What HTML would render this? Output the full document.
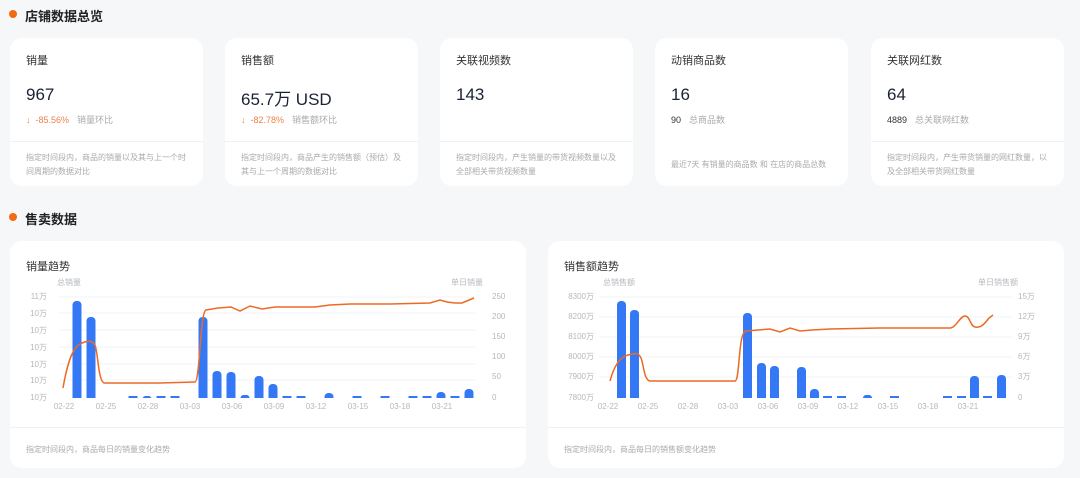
<!DOCTYPE html>
<html><head><meta charset="utf-8"><style>
*{margin:0;padding:0;box-sizing:border-box}
body{width:1080px;height:478px;background:#f5f7f9;font-family:"Liberation Sans","Noto Sans CJK SC",sans-serif;position:relative;overflow:hidden;color:#1f2533}
.h{position:absolute;left:25px;font-size:13px;font-weight:bold;color:#222}
.h:before{content:"";position:absolute;left:-16px;top:4px;width:8px;height:8px;border-radius:50%;background:#f26b10}
.card{position:absolute;top:38px;width:193px;height:148px;background:#fff;border-radius:12px}
.t{position:absolute;left:16px;top:14px;font-size:11px;color:#333}
.v{position:absolute;left:16px;top:47px;font-size:17px;color:#1a2233}
.s{position:absolute;left:16px;top:75px;font-size:9px;color:#aaa}
.s b{font-weight:normal;color:#f0804a;margin-right:8px}
.s i{font-style:normal;color:#333;margin-right:8px}
.line{position:absolute;left:0;right:0;top:103px;border-top:1px solid #f0f1f3}
.d{position:absolute;left:16px;top:113px;width:162px;font-size:8px;line-height:14px;color:#aaa}
.cc{position:absolute;top:241px;width:516px;height:227px;background:#fff;border-radius:12px}
.cc .t{top:17px;font-size:11px}
.cc .line{top:186px}
.cc .d{top:202px;width:400px}
svg{position:absolute;left:0;top:0}
svg text{font-family:"Liberation Sans","Noto Sans CJK SC",sans-serif;font-size:8px;fill:#b5b8bd}
</style></head><body>
<div class="h" style="top:6px">店铺数据总览</div>
<div class="card" style="left:10px"><div class="t">销量</div><div class="v">967</div><div class="s"><b>↓ &nbsp;-85.56%</b>销量环比</div><div class="line"></div><div class="d">指定时间段内，商品的销量以及其与上一个时间周期的数据对比</div></div>
<div class="card" style="left:225px"><div class="t">销售额</div><div class="v">65.7万 USD</div><div class="s"><b>↓ &nbsp;-82.78%</b>销售额环比</div><div class="line"></div><div class="d">指定时间段内，商品产生的销售额（预估）及其与上一个周期的数据对比</div></div>
<div class="card" style="left:440px"><div class="t">关联视频数</div><div class="v">143</div><div class="line"></div><div class="d">指定时间段内，产生销量的带货视频数量以及全部相关带货视频数量</div></div>
<div class="card" style="left:655px"><div class="t">动销商品数</div><div class="v">16</div><div class="s"><i>90</i>总商品数</div><div class="d" style="top:120px;width:175px">最近7天 有销量的商品数 和 在店的商品总数</div></div>
<div class="card" style="left:871px"><div class="t">关联网红数</div><div class="v">64</div><div class="s"><i>4889</i>总关联网红数</div><div class="line"></div><div class="d">指定时间段内，产生带货销量的网红数量，以及全部相关带货网红数量</div></div>
<div class="h" style="top:209px">售卖数据</div>
<div class="cc" style="left:10px"><div class="t">销量趋势</div><div class="line"></div><div class="d">指定时间段内，商品每日的销量变化趋势</div></div>
<div class="cc" style="left:548px"><div class="t">销售额趋势</div><div class="line"></div><div class="d">指定时间段内，商品每日的销售额变化趋势</div></div>
<svg width="1080" height="478">
<g stroke="#f2f3f5" stroke-width="1">
<path d="M59 313H475M59 330H475M59 347H475M59 364H475M59 380H475M59 297H475"/>
<path d="M599 317H1012M599 337H1012M599 357H1012M599 377H1012M599 297H1012"/>
</g>
<g fill="#3478f6">
<rect x="72.5" y="301" width="9" height="101" rx="4"/><rect x="86.5" y="317" width="9" height="85" rx="4"/>
<rect x="142.5" y="396" width="9" height="6" rx="3"/><rect x="198.5" y="317" width="9" height="85" rx="4"/>
<rect x="212.5" y="371" width="9" height="31" rx="4"/><rect x="226.5" y="372" width="9" height="30" rx="4"/>
<rect x="240.5" y="395" width="9" height="7" rx="3"/><rect x="254.5" y="376" width="9" height="26" rx="4"/>
<rect x="268.5" y="384" width="9" height="18" rx="4"/><rect x="324.5" y="393" width="9" height="9" rx="4"/>
<rect x="436.5" y="392" width="9" height="10" rx="4"/><rect x="464.5" y="389" width="9" height="13" rx="4"/>
<rect x="128.5" y="396" width="9" height="6"/><rect x="156.5" y="396" width="9" height="6"/><rect x="170.5" y="396" width="9" height="6"/><rect x="282.5" y="396" width="9" height="6"/><rect x="296.5" y="396" width="9" height="6"/><rect x="352.5" y="396" width="9" height="6"/><rect x="380.5" y="396" width="9" height="6"/><rect x="408.5" y="396" width="9" height="6"/><rect x="422.5" y="396" width="9" height="6"/><rect x="450.5" y="396" width="9" height="6"/>
<rect x="617" y="301" width="9" height="101" rx="4"/><rect x="630" y="310" width="9" height="92" rx="4"/>
<rect x="743" y="313" width="9" height="89" rx="4"/><rect x="757" y="363" width="9" height="39" rx="4"/>
<rect x="770" y="366" width="9" height="36" rx="4"/><rect x="797" y="367" width="9" height="35" rx="4"/>
<rect x="810" y="389" width="9" height="13" rx="4"/><rect x="823" y="396" width="9" height="6"/><rect x="837" y="396" width="9" height="6"/>
<rect x="863" y="395" width="9" height="7" rx="3"/><rect x="890" y="396" width="9" height="6"/><rect x="943" y="396" width="9" height="6"/><rect x="957" y="396" width="9" height="6"/>
<rect x="970" y="376" width="9" height="26" rx="4"/><rect x="983" y="396" width="9" height="6"/><rect x="997" y="375" width="9" height="27" rx="4"/>
</g>
<rect x="55" y="398" width="425" height="5" fill="#fff"/>
<rect x="600" y="398" width="412" height="5" fill="#fff"/>
<g text-anchor="end"><text x="47" y="299">11万</text><text x="47" y="316">10万</text><text x="47" y="333">10万</text><text x="47" y="350">10万</text><text x="47" y="367">10万</text><text x="47" y="383">10万</text><text x="47" y="400">10万</text>
<text x="594" y="299">8300万</text><text x="594" y="319">8200万</text><text x="594" y="339">8100万</text><text x="594" y="359">8000万</text><text x="594" y="379">7900万</text><text x="594" y="400">7800万</text></g>
<text x="57" y="285">总销量</text><text x="451" y="285">单日销量</text><text x="603" y="285">总销售额</text><text x="978" y="285">单日销售额</text>
<text x="492" y="299">250</text><text x="492" y="319">200</text><text x="492" y="339">150</text><text x="492" y="359">100</text><text x="492" y="379">50</text><text x="492" y="400">0</text>
<text x="1018" y="299">15万</text><text x="1018" y="319">12万</text><text x="1018" y="339">9万</text><text x="1018" y="359">6万</text><text x="1018" y="379">3万</text><text x="1018" y="400">0</text>
<g text-anchor="middle"><text x="64" y="409">02-22</text><text x="106" y="409">02-25</text><text x="148" y="409">02-28</text><text x="190" y="409">03-03</text><text x="232" y="409">03-06</text><text x="274" y="409">03-09</text><text x="316" y="409">03-12</text><text x="358" y="409">03-15</text><text x="400" y="409">03-18</text><text x="442" y="409">03-21</text>
<text x="608" y="409">02-22</text><text x="648" y="409">02-25</text><text x="688" y="409">02-28</text><text x="728" y="409">03-03</text><text x="768" y="409">03-06</text><text x="808" y="409">03-09</text><text x="848" y="409">03-12</text><text x="888" y="409">03-15</text><text x="928" y="409">03-18</text><text x="968" y="409">03-21</text></g>
<path fill="none" stroke="#ec6a23" stroke-width="1.5" d="M63 388C67 365 72 348 80 344S92 340 95 345C98 352 98 380 104 383L160 383L195 382C200 382 200 312 206 310L218 308L231 307L240 311L250 306L262 309L275 307L290 307L315 307L330 305L350 304L390 304L430 303L440 300L447 302L455 303L462 303L474 298"/>
<path fill="none" stroke="#ec6a23" stroke-width="1.5" d="M610 381C614 366 620 357 628 355S638 352 641 358C644 366 644 380 650 381L735 381C740 381 738 332 746 331L758 330L770 329L780 332L790 328L800 331L812 330L830 329L880 328L950 328C956 328 960 316 965 316S970 326 975 327S983 326 989 318L993 315"/>
</svg>
</body></html>
